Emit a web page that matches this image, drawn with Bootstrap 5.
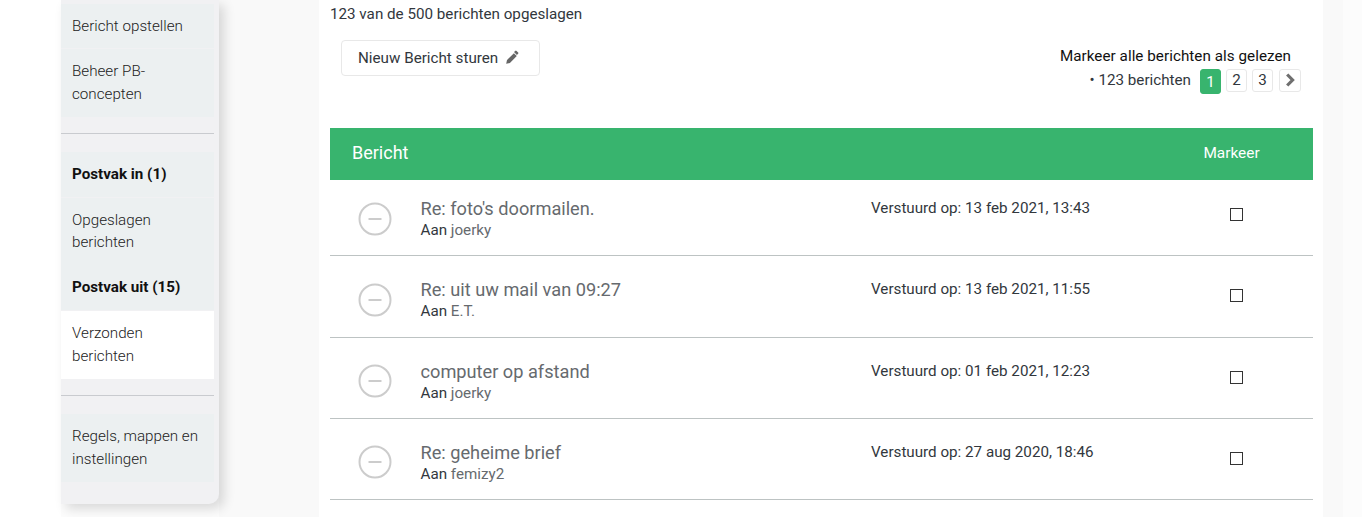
<!DOCTYPE html>
<html lang="nl">
<head>
<meta charset="UTF-8">
<meta name="viewport" content="width=device-width, initial-scale=1.0">
<title>Verzonden berichten</title>
<link href="https://cdn.jsdelivr.net/npm/bootstrap@5.3.0/dist/css/bootstrap.min.css" rel="stylesheet">
<style>
    html, body { height: 517px; overflow: hidden; }
    body { font-family: Roboto, "Liberation Sans", sans-serif; font-size: 15.2px; color: #32373d; background: #fcfcfc; }
    .pm-page { height: 517px; padding-left: 61px; background: linear-gradient(#fff, #fff) left / 61px 100% no-repeat; }
    .pm-side { width: 158px; height: 504px; padding: 3.5px 5px 0 0; background: #f1f1f3; border-radius: 0 0 10px 0; box-shadow: 5px 5px 12px rgba(0,0,0,.14); font-weight: 300; flex-shrink: 0; position: relative; z-index: 1; }
    .pm-side a { display: block; padding: 11px 11px; margin-bottom: 1px; line-height: 22.8px; background: #ecf0f1; color: #222; text-decoration: none; }
    .pm-side a.pm-bold { font-weight: 700; color: #111; }
    .pm-side a.pm-tight { margin-bottom: 0; }
    .pm-side a.pm-on { background: #fff; margin-bottom: 0; padding-bottom: 11.5px; }
    .pm-side hr { margin: 16px 0 18px; border-color: #c9cbcf; opacity: 1; }
    .pm-gap { width: 100px; background: #f9f9f9; flex-shrink: 0; }
    .pm-main { width: 1004px; height: 517px; background: #fff; padding: 0 10px 0 11px; flex-shrink: 0; }
    .pm-right { width: 20px; background: #f9f9f9; flex-shrink: 0; }
    .pm-count { line-height: 17px; padding-top: 6px; }
    .pm-new { margin: 17px 0 0 11px; width: 199px; height: 36px; padding: 0 4px 0 0; font-size: 15.2px; color: #32373d; background: #fff; border: 1px solid #e8e8e8; border-radius: 4px; }
    .pm-new svg { margin-left: 3px; vertical-align: -1px; }
    .pm-tools { padding: 25px 12px 0 0; text-align: right; }
    .pm-mark-all { color: #111; line-height: 17px; margin-right: 10px; letter-spacing: .05px; }
    .pm-pages { margin-top: 4px; height: 25px; gap: 5px; }
    .pm-pg { width: 21px; height: 23px; line-height: 21px; border: 1px solid #e8e8e8; border-radius: 3px; text-align: center; color: #32373d; background: #fff; }
    .pm-pg.pm-cur { background: #38b46e; border-color: #38b46e; color: #fff; height: 25px; line-height: 25px; }
    .pm-pg.pm-next { width: 22px; margin-left: 1px; }
    .pm-pg.pm-next svg { vertical-align: -2px; }
    .pm-total { margin-right: 4px; }
    .pm-head { margin-top: 34px; margin-bottom: -5px; height: 52px; background: #38b46e; color: #fff; }
    .pm-head-title { font-size: 18px; font-weight: 400; padding: 0 0 4px 22px; flex: 1; }
    .pm-head-mark { width: 154px; text-align: center; font-weight: 400; font-size: 15.4px; padding: 0 9px 1px 0; }
    .pm-row { height: 81.25px; border-bottom: 1px solid #bdc3c3; }
    .pm-ico { width: 90.5px; padding: 7px 0 0 28px; flex-shrink: 0; }
    .pm-ico svg { display: block; }
    .pm-msg { width: 450.5px; flex-shrink: 0; padding-top: 24px; }
    .pm-subject { font-size: 18.2px; color: #666a6e; line-height: 20px; }
    .pm-to { line-height: 20px; color: #32373d; margin-top: 1px; }
    .pm-to span { color: #666a6e; }
    .pm-date { flex: 1; padding-top: 24px; line-height: 18px; }
    .pm-check { width: 13px; height: 13px; border: 1px solid #333; margin: 0 70px 1px 0; flex-shrink: 0; }
</style>
</head>
<body>
<div class="pm-page d-flex">
    <nav class="pm-side">
        <a href="#">Bericht opstellen</a>
        <a href="#">Beheer PB-concepten</a>
        <hr>
        <a href="#" class="pm-bold">Postvak in (1)</a>
        <a href="#" class="pm-tight">Opgeslagen berichten</a>
        <a href="#" class="pm-bold">Postvak uit (15)</a>
        <a href="#" class="pm-on">Verzonden berichten</a>
        <hr>
        <a href="#">Regels, mappen en instellingen</a>
    </nav>
    <div class="pm-gap"></div>
    <main class="pm-main">
        <div class="pm-count">123 van de 500 berichten opgeslagen</div>
        <div class="d-flex justify-content-between">
            <button type="button" class="btn pm-new">Nieuw Bericht sturen
                <svg width="14" height="14" viewBox="0 0 14 14"><path fill="#666" d="M10.200.9a1 1 0 0 1 1.400 0l1.500 1.500a1 1 0 0 1 0 1.400l-1.200 1.200-2.900-2.900zM8.900 3.200l2.900 2.900-6.900 6.900-3.700.8.8-3.700z"/></svg>
            </button>
            <div class="pm-tools">
                <div class="pm-mark-all">Markeer alle berichten als gelezen</div>
                <div class="pm-pages d-flex justify-content-end align-items-start">
                    <span class="pm-total">&bull; 123 berichten</span>
                    <span class="pm-pg pm-cur">1</span>
                    <span class="pm-pg">2</span>
                    <span class="pm-pg">3</span>
                    <span class="pm-pg pm-next"><svg width="12" height="14" viewBox="0 0 12 14"><path fill="none" stroke="#6f6f6f" stroke-width="3.200" d="M3.200 1.500 8.600 7l-5.400 5.500"/></svg></span>
                </div>
            </div>
        </div>
        <div class="pm-head d-flex align-items-center">
            <div class="pm-head-title">Bericht</div>
            <div class="pm-head-mark">Markeer</div>
        </div>
        <div class="pm-row d-flex align-items-center">
            <div class="pm-ico"><svg width="34" height="34" viewBox="0 0 34 34"><circle cx="17" cy="17" r="15.500" fill="none" stroke="#ccc" stroke-width="2"/><path stroke="#ccc" stroke-width="2" d="M10.500 17h13"/></svg></div>
            <div class="pm-msg align-self-start"><div class="pm-subject">Re: foto's doormailen.</div><div class="pm-to">Aan <span>joerky</span></div></div>
            <div class="pm-date align-self-start">Verstuurd op: 13 feb 2021, 13:43</div>
            <div class="pm-check"></div>
        </div>
        <div class="pm-row d-flex align-items-center">
            <div class="pm-ico"><svg width="34" height="34" viewBox="0 0 34 34"><circle cx="17" cy="17" r="15.500" fill="none" stroke="#ccc" stroke-width="2"/><path stroke="#ccc" stroke-width="2" d="M10.500 17h13"/></svg></div>
            <div class="pm-msg align-self-start"><div class="pm-subject">Re: uit uw mail van 09:27</div><div class="pm-to">Aan <span>E.T.</span></div></div>
            <div class="pm-date align-self-start">Verstuurd op: 13 feb 2021, 11:55</div>
            <div class="pm-check"></div>
        </div>
        <div class="pm-row d-flex align-items-center">
            <div class="pm-ico"><svg width="34" height="34" viewBox="0 0 34 34"><circle cx="17" cy="17" r="15.500" fill="none" stroke="#ccc" stroke-width="2"/><path stroke="#ccc" stroke-width="2" d="M10.500 17h13"/></svg></div>
            <div class="pm-msg align-self-start"><div class="pm-subject">computer op afstand</div><div class="pm-to">Aan <span>joerky</span></div></div>
            <div class="pm-date align-self-start">Verstuurd op: 01 feb 2021, 12:23</div>
            <div class="pm-check"></div>
        </div>
        <div class="pm-row d-flex align-items-center">
            <div class="pm-ico"><svg width="34" height="34" viewBox="0 0 34 34"><circle cx="17" cy="17" r="15.500" fill="none" stroke="#ccc" stroke-width="2"/><path stroke="#ccc" stroke-width="2" d="M10.500 17h13"/></svg></div>
            <div class="pm-msg align-self-start"><div class="pm-subject">Re: geheime brief</div><div class="pm-to">Aan <span>femizy2</span></div></div>
            <div class="pm-date align-self-start">Verstuurd op: 27 aug 2020, 18:46</div>
            <div class="pm-check"></div>
        </div>
    </main>
    <div class="pm-right"></div>
</div>
<script src="https://cdn.jsdelivr.net/npm/bootstrap@5.3.0/dist/js/bootstrap.bundle.min.js"></script>
</body>
</html>
